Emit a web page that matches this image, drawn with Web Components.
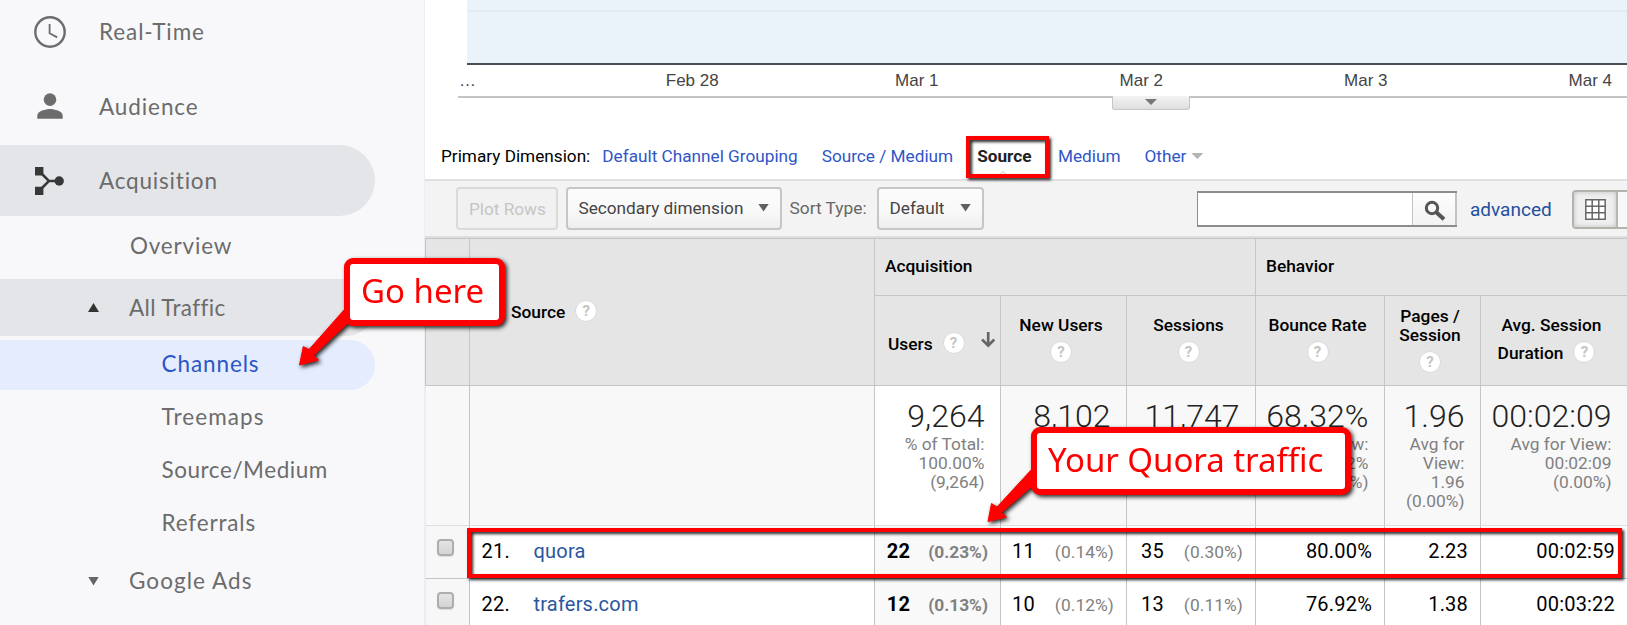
<!DOCTYPE html>
<html lang="en">
<head>
<meta charset="utf-8">
<title>Analytics</title>
<style>
  body {
    margin: 0;
    width: 1627px;
    height: 625px;
    overflow: hidden;
    font-family: Roboto, sans-serif;
  }
</style>
</head>
<body>
<analytics-page></analytics-page>

<script>
class NavItem extends HTMLElement {
  constructor() {
    super();
    this.attachShadow({ mode: "open" });
  }

  static get styles() {
    return /* css */`
      :host {
        display: flex;
        align-items: center;
        box-sizing: border-box;
        width: 375px;
        padding-left: 99px;
        font: 22.5px/28px Lato, sans-serif;
        color: #6b6c6b;
        white-space: nowrap;
      }

      :host([level="2"]) { padding-left: 129px; }
      :host([level="3"]) { padding-left: 161.5px; }

      :host([open]) {
        background: #e4e5e8;
        border-radius: 0 36px 36px 0;
      }

      :host([selected]) {
        background: #e4ecfd;
        border-radius: 0 25px 25px 0;
        color: #2a56c6;
      }

      slot[name="icon"] {
        display: flex;
        width: 36px;
        margin-left: -67px;
        margin-right: 31px;
      }

      i {
        width: 11px;
        height: 9px;
        margin-left: -41px;
        margin-right: 30px;
        background: #666;
        clip-path: polygon(0 0, 100% 0, 50% 100%);
      }

      i.up {
        background: #333;
        clip-path: polygon(50% 0, 100% 100%, 0 100%);
      }
    `;
  }

  connectedCallback() {
    const arrow = this.getAttribute("arrow");
    const icon = this.hasAttribute("icon") ? `<slot name="icon"></slot>` : "";

    this.shadowRoot.innerHTML = /* html */`
      <style>${NavItem.styles}</style>
      ${icon}
      ${arrow ? `<i class="${arrow}"></i>` : ""}
      <span><slot></slot></span>
    `;
  }
}

customElements.define("nav-item", NavItem);

class SideNav extends HTMLElement {
  constructor() {
    super();
    this.attachShadow({ mode: "open" });
  }

  static get styles() {
    return /* css */`
      :host {
        display: flex;
        flex-direction: column;
        box-sizing: border-box;
        height: 625px;
        background: #f8f8fb;
        border-right: 1px solid #eeeef0;
      }

      nav-item { flex: none; }
      svg { width: 36px; height: 36px; }
    `;
  }

  connectedCallback() {
    this.shadowRoot.innerHTML = /* html */`
      <style>${SideNav.styles}</style>
      <nav-item icon style="height: 64px; letter-spacing: .9px">
        <svg slot="icon" viewBox="0 0 36 36" fill="none" stroke="#6b6c6b">
          <circle cx="18" cy="18" r="14.7" stroke-width="2.4"/>
          <path d="M17.6 10v9.3l7.6 4.1" stroke-width="1.8"/>
        </svg>Real-Time</nav-item>
      <nav-item icon style="height: 76px; margin-top: 5px; letter-spacing: .9px">
        <svg slot="icon" viewBox="0 0 36 36" fill="#6b6c6b">
          <circle cx="18" cy="10.6" r="6.3"/>
          <path d="M5.3 29.7v-3.2c0-4.3 8.5-6.4 12.7-6.4s12.7 2.1 12.7 6.4v3.2z"/>
        </svg>Audience</nav-item>
      <nav-item icon open style="height: 71px; letter-spacing: .8px">
        <svg slot="icon" viewBox="0 0 36 36" fill="#373938" stroke="#373938">
          <path d="M3 4h8.4v8.4H3zM3 23.7h8.4v8.4H3z" stroke="none"/>
          <path d="M7 8l10 10L7 28M17 18h10" fill="none" stroke-width="2.5"/>
          <circle cx="27.2" cy="18" r="4.7" stroke="none"/>
        </svg>Acquisition</nav-item>
      <nav-item level="2" style="height: 60px; margin: 0 0 3px 1px; letter-spacing: .8px">Overview</nav-item>
      <nav-item level="2" arrow="up" open style="height: 57px; letter-spacing: .35px">All Traffic</nav-item>
      <nav-item level="3" selected style="height: 50px; margin-top: 4px; padding-bottom: 2px; letter-spacing: .9px">Channels</nav-item>
      <nav-item level="3" style="height: 53px; letter-spacing: 1.1px">Treemaps</nav-item>
      <nav-item level="3" style="height: 53px; letter-spacing: .55px">Source/Medium</nav-item>
      <nav-item level="3" style="height: 53px; letter-spacing: .85px">Referrals</nav-item>
      <nav-item level="2" arrow="down" style="height: 64px; letter-spacing: 1.05px">Google Ads</nav-item>
    `;
  }
}

customElements.define("side-nav", SideNav);

class ChartAxis extends HTMLElement {
  constructor() {
    super();
    this.attachShadow({ mode: "open" });
  }

  static get styles() {
    return /* css */`
      :host {
        display: block;
        position: relative;
        height: 98px;
      }

      .plot {
        box-sizing: border-box;
        height: 65px;
        margin-left: 42px;
        padding-top: 10px;
        background: #eaf2fa;
        border-bottom: 2px solid #4b4f55;
      }

      .plot hr {
        height: 2px;
        margin: 0;
        border: 0;
        background: #e4ebf2;
      }

      .labels {
        display: grid;
        grid-template-columns: 122px repeat(5, 224.5px);
        box-sizing: border-box;
        height: 33px;
        margin-left: 33px;
        padding-top: 6px;
        border-bottom: 2px solid #c3c3c3;
        font: 17px/20px "Liberation Sans", sans-serif;
        color: #444;
        text-align: center;
        overflow: hidden;
      }

      .labels :first-child { text-align: left; padding-left: 1px; }

      .handle {
        position: absolute;
        left: 687px;
        top: 96px;
        display: flex;
        justify-content: center;
        box-sizing: border-box;
        width: 78px;
        height: 14px;
        padding-top: 3px;
        background: linear-gradient(#f3f3f3, #dedede);
        border: solid #c6c6c6;
        border-width: 0 1px 1px;
        border-radius: 0 0 3px 3px;
      }

      .handle i {
        width: 12px;
        height: 6px;
        background: #777;
        clip-path: polygon(0 0, 100% 0, 50% 100%);
      }
    `;
  }

  connectedCallback() {
    const labels = this.getAttribute("labels").split(",");

    this.shadowRoot.innerHTML = /* html */`
      <style>${ChartAxis.styles}</style>
      <div class="plot"><hr></div>
      <div class="labels">${labels.map(label => `<span>${label}</span>`).join("")}</div>
      <div class="handle"><i></i></div>
    `;
  }
}

customElements.define("chart-axis", ChartAxis);

class DimensionBar extends HTMLElement {
  constructor() {
    super();
    this.attachShadow({ mode: "open" });
  }

  static get styles() {
    return /* css */`
      :host {
        display: flex;
        align-items: center;
        gap: 24px;
        box-sizing: border-box;
        height: 83px;
        padding: 48px 0 13px 16px;
        border-bottom: 2px solid #e0e0e0;
        font-size: 17.2px;
        line-height: 20px;
        color: #2f55c8;
        white-space: nowrap;
      }

      .label { margin-right: -12px; color: #000; }

      .current {
        position: relative;
        margin-right: 2.5px;
        font-weight: 700;
        color: #222;
      }

      .current::after {
        content: "";
        position: absolute;
        left: 50%;
        top: 27px;
        width: 11px;
        height: 11px;
        margin-left: -7px;
        border: 1.5px solid #ccc;
        border-width: 1.5px 0 0 1.5px;
        transform: rotate(45deg);
        clip-path: polygon(0 0, 100% 0, 0 100%);
      }

      .other { display: flex; align-items: center; gap: 5px; }

      .other i {
        width: 12px;
        height: 6px;
        background: #b5b5b5;
        clip-path: polygon(0 0, 100% 0, 50% 100%);
      }
    `;
  }

  connectedCallback() {
    this.shadowRoot.innerHTML = /* html */`
      <style>${DimensionBar.styles}</style>
      <span class="label">Primary Dimension:</span>
      <span>Default Channel Grouping</span>
      <span>Source / Medium</span>
      <span class="current">Source</span>
      <span>Medium</span>
      <span class="other">Other<i></i></span>
    `;
  }
}

customElements.define("dimension-bar", DimensionBar);

class ToolButton extends HTMLElement {
  constructor() {
    super();
    this.attachShadow({ mode: "open" });
  }

  static get styles() {
    return /* css */`
      :host {
        display: flex;
        align-items: center;
        justify-content: space-between;
        box-sizing: border-box;
        height: 43px;
        padding: 0 11px 1px 10.5px;
        border: 2px solid #c6c6c6;
        border-radius: 4px;
        background: linear-gradient(#fcfcfc, #f8f8f8 60%, #eee);
        font-size: 17.2px;
        color: #444;
        white-space: nowrap;
      }

      :host([disabled]) {
        padding: 1px 0 0 11px;
        border-color: #dadada;
        background: #f1f1f1;
        color: #c5c5c5;
      }

      i {
        width: 11px;
        height: 8px;
        margin-top: -1px;
        background: #606060;
        clip-path: polygon(0 0, 100% 0, 50% 100%);
      }
    `;
  }

  connectedCallback() {
    this.shadowRoot.innerHTML = /* html */`
      <style>${ToolButton.styles}</style>
      <slot></slot>
      ${this.hasAttribute("menu") ? "<i></i>" : ""}
    `;
  }
}

customElements.define("tool-button", ToolButton);

class TableToolbar extends HTMLElement {
  constructor() {
    super();
    this.attachShadow({ mode: "open" });
  }

  static get styles() {
    return /* css */`
      :host {
        display: flex;
        align-items: center;
        box-sizing: border-box;
        height: 57px;
        padding: 0 0 0 31px;
        background: #f3f3f3;
        border-bottom: 2px solid #dedede;
        font-size: 17.33px;
        overflow: hidden;
        white-space: nowrap;
      }

      :host > * { flex: none; }

      .sort {
        box-sizing: border-box;
        width: 95px;
        padding-left: 7.5px;
        margin-top: -1px;
        color: #666;
      }

      .search {
        display: flex;
        width: 260px;
        height: 36px;
        box-sizing: border-box;
        margin: 1px 0 0 213px;
        border: 2px solid #8c8c8c;
        border-width: 2px 0 2px 1px;
        background: #fff;
      }

      .search span {
        box-sizing: border-box;
        width: 45px;
        margin-left: auto;
        padding: 7px 0 0 11px;
        border: solid #c3c3c3;
        border-width: 0 2px 0 1px;
        background: linear-gradient(#fdfdfd, #f3f3f3);
      }

      .advanced {
        box-sizing: border-box;
        width: 115px;
        padding: 1px 0 0 13px;
        font-size: 19px;
        color: #1f4f9e;
      }

      .views {
        display: flex;
        box-sizing: border-box;
        width: 90px;
        height: 39px;
        margin-top: 2px;
        border: 2px solid #b3b3ad;
        border-radius: 4px;
        background: #f8f8f8;
      }

      .views span {
        display: flex;
        align-items: center;
        justify-content: center;
        width: 42px;
        border-right: 2px solid #b8b8b3;
        background: #efefef;
        box-shadow: inset 0 0 5px rgba(0, 0, 0, .2);
      }
    `;
  }

  connectedCallback() {
    this.shadowRoot.innerHTML = /* html */`
      <style>${TableToolbar.styles}</style>
      <tool-button disabled style="width: 102px">Plot Rows</tool-button>
      <tool-button menu style="width: 216px; margin-left: 8px">Secondary dimension</tool-button>
      <span class="sort">Sort Type:</span>
      <tool-button menu style="width: 107px">Default</tool-button>
      <div class="search">
        <span>
          <svg width="22" height="22" viewBox="0 0 22 22" fill="none" stroke="#555">
            <circle cx="8" cy="8" r="5.7" stroke-width="3"/>
            <path d="M12.5 12.5l7.5 6.8" stroke-width="4"/>
          </svg>
        </span>
      </div>
      <span class="advanced">advanced</span>
      <div class="views">
        <span>
          <svg width="21" height="21" viewBox="0 0 21 21" fill="#fff" stroke="#666" stroke-width="1.5">
            <path d="M.8.8h19.4v19.4H.8zM7.2.8v19.4M13.8.8v19.4M.8 7.2h19.4M.8 13.8h19.4"/>
          </svg>
        </span>
      </div>
    `;
  }
}

customElements.define("table-toolbar", TableToolbar);

class HelpDot extends HTMLElement {
  constructor() {
    super();
    this.attachShadow({ mode: "open" });
    this.shadowRoot.innerHTML = /* html */`
      <style>
        :host {
          flex: none;
          box-sizing: border-box;
          width: 22px;
          height: 22px;
          border: 1px solid #dadada;
          border-radius: 50%;
          background: #fff;
          font: 700 15px/20px Roboto, sans-serif;
          color: #c4c4c4;
          text-align: center;
        }
      </style>?`;
  }
}

customElements.define("help-dot", HelpDot);

class ReportTable extends HTMLElement {
  constructor() {
    super();
    this.attachShadow({ mode: "open" });
  }

  static get styles() {
    return /* css */`
      :host {
        display: grid;
        grid-template-columns: 44px 405px 126px 126px 129px 129px 96px 147px;
        grid-template-rows: 57px 90px 140px 53px 53px;
        border-top: 1px solid #c5c5c5;
        white-space: nowrap;
      }

      :host > div {
        box-sizing: border-box;
        border-left: 1px solid #c5c5c5;
        border-bottom: 1px solid #c5c5c5;
      }

      .head {
        display: flex;
        flex-direction: column;
        align-items: center;
        justify-content: center;
        padding: 0 5px 2px 0;
        background: #e5e5e5;
        font: 500 17.33px/19px Roboto, sans-serif;
        color: #000;
        text-align: center;
      }

      .head > help-dot { margin-top: 6px; }
      .tall { grid-row: span 2; }
      .group { grid-column: span 3; align-items: flex-start; padding: 0 0 2px 10px; }

      .line { display: flex; align-items: center; }
      .line span { padding-top: 2px; }
      .source { align-self: flex-start; padding: 2px 0 0 41px; }
      .source help-dot, .duration help-dot { margin-left: 10px; }
      .source help-dot { margin-top: -2px; }
      .duration { margin: 6px 10px 0 0; }
      .users { box-sizing: border-box; width: 100%; padding: 10px 0 0 13px; }
      .users help-dot { margin: -3px 0 0 10px; }
      .users svg { margin: -9px 0 0 16px; }

      .total {
        padding: 12px 15.5px 0 0;
        background: #f8f8f8;
        font-size: 17.33px;
        line-height: 19px;
        color: #808080;
        text-align: right;
      }

      :host > .total { border-bottom-color: #dedede; }

      .total b {
        display: block;
        font-size: 32px;
        font-weight: 300;
        line-height: 37px;
        color: #222;
      }

      .white { background: #fff; }

      .cell {
        display: flex;
        align-items: baseline;
        justify-content: flex-end;
        padding: 12.5px 12px 0 11.5px;
        background: #fff;
        font-size: 20px;
        line-height: 24px;
        letter-spacing: .2px;
        color: #000;
      }

      .cell.name { justify-content: flex-start; }
      .cell.name span { width: 52px; }
      .cell a { color: #2a56a0; }
      .cell small { margin-left: 20px; font-size: 17.33px; letter-spacing: .1px; color: #808080; }
      .cell.sorted { background: #f9f9f9; font-weight: 700; }
      .cell.sorted small { margin-left: 18px; letter-spacing: 0; }

      :host > .check {
        padding: 13px 0 0 11px;
        background: #f7f7f7;
        border-left-color: #eaeaea;
      }

      .check i {
        display: block;
        box-sizing: border-box;
        width: 17px;
        height: 17px;
        border: 2px solid #adadad;
        border-radius: 4px;
        background: linear-gradient(#e4e4e4, #d4d4d4);
        box-shadow: 0 1px 1px #ddd;
      }

      :host > .edge { border-left-color: #eaeaea; }
    `;
  }

  renderTotal([value, ...notes], index) {
    return `<div class="total ${index === 0 ? "white" : ""}"><b>${value}</b>${notes.join("<br>")}</div>`;
  }

  renderRow(row) {
    const pair = ([value, share], css = "") => `<div class="cell ${css}">${value}<small>(${share})</small></div>`;
    return /* html */`
      <div class="check"><i></i></div>
      <div class="cell name"><span>${row.index}.</span><a>${row.source}</a></div>
      ${pair(row.users, "sorted")}${pair(row.newUsers)}${pair(row.sessions)}
      ${row.behavior.map(value => `<div class="cell">${value}</div>`).join("")}
    `;
  }

  connectedCallback() {
    const totals = [
      ["9,264", "% of Total:", "100.00%", "(9,264)"],
      ["8,102"],
      ["11,747"],
      ["68.32%", "Avg for View:", "68.32%", "(0.00%)"],
      ["1.96", "Avg for", "View:", "1.96", "(0.00%)"],
      ["00:02:09", "Avg for View:", "00:02:09", "(0.00%)"],
    ];
    const rows = [
      { index: 21, source: "quora", users: ["22", "0.23%"], newUsers: ["11", "0.14%"], sessions: ["35", "0.30%"], behavior: ["80.00%", "2.23", "00:02:59"] },
      { index: 22, source: "trafers.com", users: ["12", "0.13%"], newUsers: ["10", "0.12%"], sessions: ["13", "0.11%"], behavior: ["76.92%", "1.38", "00:03:22"] },
    ];

    this.shadowRoot.innerHTML = /* html */`
      <style>${ReportTable.styles}</style>
      <div class="head tall"></div>
      <div class="head tall"><div class="line source">Source<help-dot></help-dot></div></div>
      <div class="head group">Acquisition</div>
      <div class="head group">Behavior</div>
      <div class="head">
        <div class="line users">Users<help-dot></help-dot>
          <svg width="16" height="18" viewBox="0 0 16 18" fill="none" stroke="#666" stroke-width="3"><path d="M8 0v15M1.2 8.5L8 15.3l6.800-6.800"/></svg>
        </div>
      </div>
      <div class="head">New Users<help-dot></help-dot></div>
      <div class="head">Sessions<help-dot></help-dot></div>
      <div class="head">Bounce Rate<help-dot></help-dot></div>
      <div class="head">Pages /<br>Session<help-dot></help-dot></div>
      <div class="head">Avg. Session<div class="line duration"><span>Duration</span><help-dot></help-dot></div></div>
      <div class="total edge"></div>
      <div class="total"></div>
      ${totals.map(this.renderTotal).join("")}
      ${rows.map(this.renderRow).join("")}
    `;
  }
}

customElements.define("report-table", ReportTable);

class RedFrame extends HTMLElement {
  constructor() {
    super();
    this.attachShadow({ mode: "open" });
    this.shadowRoot.innerHTML = /* html */`
      <style>
        :host {
          position: absolute;
          box-sizing: border-box;
          border: 4px solid #f00;
          filter: drop-shadow(2px 2px 1.5px rgba(0, 0, 0, .85));
        }
      </style>`;
  }
}

customElements.define("red-frame", RedFrame);

// Speech box with an arrow; "arrow" holds polygon points relative to the box.
class CallOut extends HTMLElement {
  constructor() {
    super();
    this.attachShadow({ mode: "open" });
  }

  static get styles() {
    return /* css */`
      :host {
        position: absolute;
        filter: drop-shadow(2px 2px 2px rgba(0, 0, 0, .85));
      }

      svg {
        position: absolute;
        left: 0;
        top: 0;
        width: 1px;
        height: 1px;
        overflow: visible;
      }

      .box {
        position: relative;
        box-sizing: border-box;
        width: 100%;
        height: 100%;
        padding-left: 11px;
        border: 6px solid #f00;
        border-radius: 9px;
        background: #fff;
        font: 33px/53px "Noto Sans", "Open Sans", sans-serif;
        color: #f00;
        white-space: nowrap;
      }
    `;
  }

  connectedCallback() {
    this.shadowRoot.innerHTML = /* html */`
      <style>${CallOut.styles}</style>
      <svg><polygon points="${this.getAttribute("arrow")}" fill="#f00" stroke="#f00" stroke-linejoin="round"/></svg>
      <div class="box"><slot></slot></div>
    `;
  }
}

customElements.define("call-out", CallOut);

class AnalyticsPage extends HTMLElement {
  constructor() {
    super();
    this.attachShadow({ mode: "open" });
  }

  static get styles() {
    return /* css */`
      :host {
        display: grid;
        grid-template-columns: 425px 1202px;
        position: relative;
        height: 625px;
        background: #fff;
        overflow: hidden;
      }
    `;
  }

  connectedCallback() {
    this.shadowRoot.innerHTML = /* html */`
      <style>${AnalyticsPage.styles}</style>
      <side-nav></side-nav>
      <main>
        <chart-axis labels="…,Feb 28,Mar 1,Mar 2,Mar 3,Mar 4"></chart-axis>
        <dimension-bar></dimension-bar>
        <table-toolbar></table-toolbar>
        <report-table></report-table>
      </main>
      <red-frame style="left: 966px; top: 136px; width: 83px; height: 42px"></red-frame>
      <red-frame style="left: 467px; top: 528px; width: 1155px; height: 50px"></red-frame>
      <call-out style="left: 344px; top: 258px; width: 160.500px; height: 68px"
        arrow="-44.5,107 -40.7,88.5 -35,91.5 0,52 5,64 -30.5,97.5 -25.5,102">Go here</call-out>
      <call-out style="left: 1031px; top: 427px; width: 320px; height: 68px; letter-spacing: -.05px"
        arrow="-43,94.5 -39.5,76.5 -34,80 1,42 5,56 -29.5,85.5 -24.5,90">Your Quora traffic</call-out>
    `;
  }
}

customElements.define("analytics-page", AnalyticsPage);
</script>
</body>
</html>
